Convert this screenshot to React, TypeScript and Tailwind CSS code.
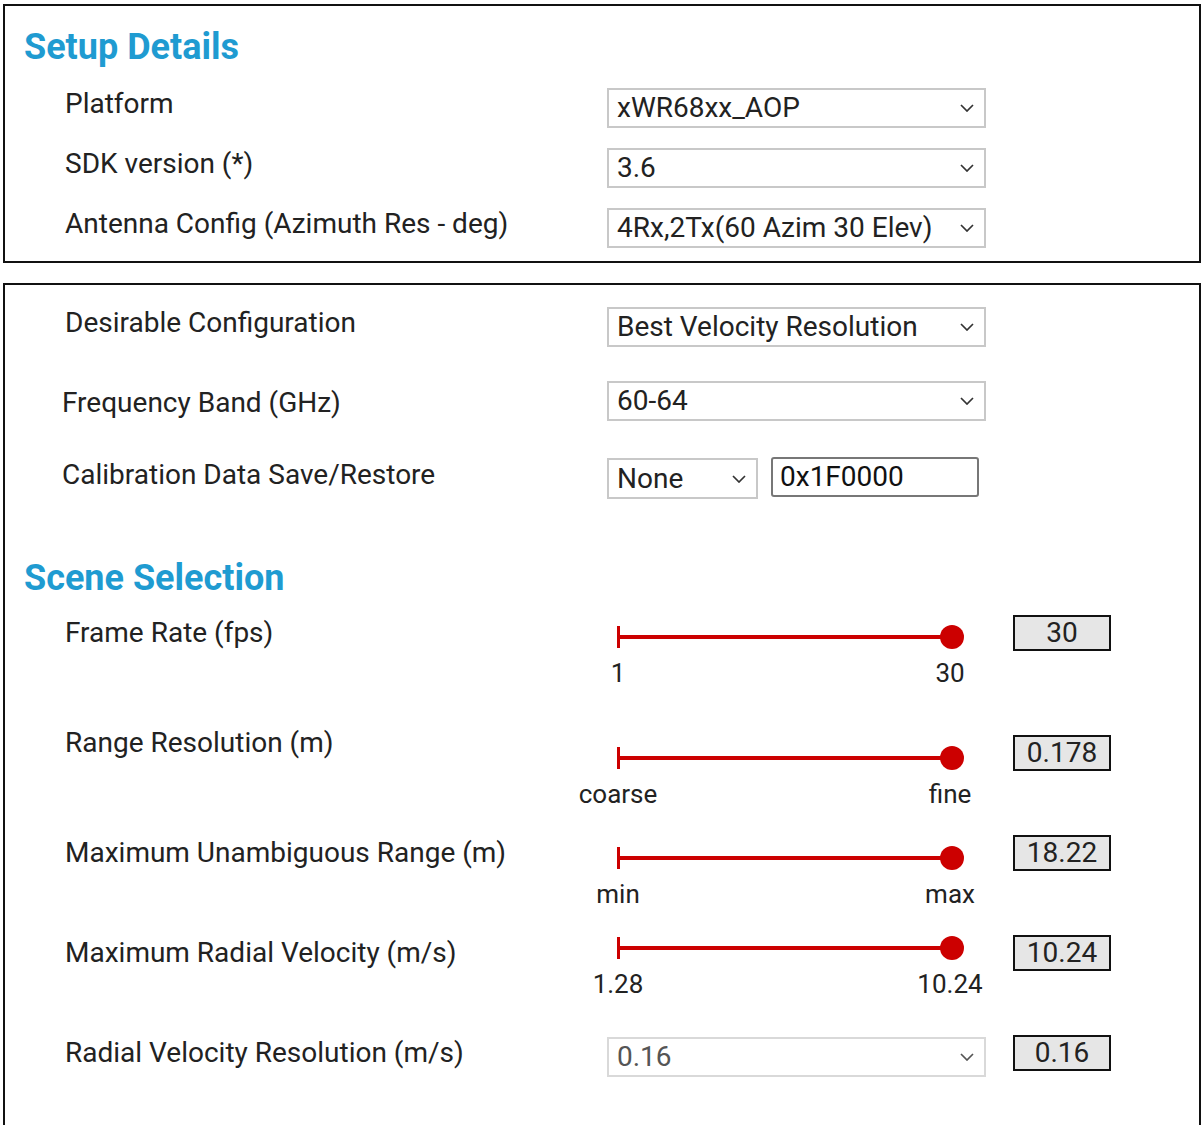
import clsx from "clsx";

type SliderRow = {
  label: string;
  min: string;
  max: string;
  value: string;
  height: string;
  labelTop: string;
  sliderTop: string;
};

const sliders: SliderRow[] = [
  { label: "Frame Rate (fps)", min: "1", max: "30", value: "30", height: "h-[120px]", labelTop: "mt-[3px]", sliderTop: "mt-[10px]" },
  { label: "Range Resolution (m)", min: "coarse", max: "fine", value: "0.178", height: "h-[100px]", labelTop: "mt-[-7px]", sliderTop: "mt-[11px]" },
  { label: "Maximum Unambiguous Range (m)", min: "min", max: "max", value: "18.22", height: "h-[100px]", labelTop: "mt-[3px]", sliderTop: "mt-[11px]" },
  { label: "Maximum Radial Velocity (m/s)", min: "1.28", max: "10.24", value: "10.24", height: "h-[100px]", labelTop: "mt-[3px]", sliderTop: "mt-[1px]" },
];

function Chevron({ muted }: { muted?: boolean }) {
  return (
    <svg width="14" height="8" viewBox="0 0 14 8" className="shrink-0">
      <path d="M1 1 L7 7 L13 1" fill="none" stroke={muted ? "#555" : "#333"} strokeWidth="1.7" />
    </svg>
  );
}

function Select({ value, className, disabled }: { value: string; className?: string; disabled?: boolean }) {
  return (
    <div
      className={clsx(
        "flex shrink-0 items-center justify-between border-2 pl-[8px] pr-[10px] text-[28px] leading-[36px]",
        disabled ? "border-[#d9d9d9] text-[#555]" : "border-[#c8c8c8] text-[#222]",
        className
      )}
    >
      <span className="whitespace-nowrap">{value}</span>
      <Chevron muted={disabled} />
    </div>
  );
}

function ValueBox({ value }: { value: string }) {
  return (
    <div className="flex h-[36px] w-[98px] shrink-0 items-center justify-center border-2 border-[#111] bg-[#e6e6e6] text-[28px] leading-none text-[#222]">
      {value}
    </div>
  );
}

function Slider({ min, max }: { min: string; max: string }) {
  return (
    <div>
      <svg width="360" height="24" viewBox="0 0 360 24" className="ml-[10px] block">
        <rect x="0" y="1" width="3" height="22" fill="#cc0000" />
        <rect x="1" y="10" width="336" height="4" fill="#cc0000" />
        <circle cx="335" cy="12" r="12" fill="#cc0000" />
      </svg>
      <div className="ml-[11px] mt-[9px] flex w-[332px] justify-between text-[26px] leading-[30px] text-[#222]">
        <span className="flex w-0 justify-center whitespace-nowrap">{min}</span>
        <span className="flex w-0 justify-center whitespace-nowrap">{max}</span>
      </div>
    </div>
  );
}

function Heading({ children }: { children: string }) {
  return <h2 className="pl-[19px] text-[36px] font-bold leading-[40px] text-[#1f9bd1]">{children}</h2>;
}

function Label({ children, className }: { children: string; className?: string }) {
  return (
    <div className={clsx("shrink-0 text-[28px] leading-[30px] text-[#222]", className)}>{children}</div>
  );
}

export default function App() {
  return (
    <div className="min-h-[1125px] bg-white pl-[3px] pt-[4px] font-['Roboto',sans-serif]">
      {/* Setup details */}
      <div className="w-[1198px] border-2 border-[#111] pb-[13px] pt-[21px]">
        <Heading>Setup Details</Heading>
        <div className="mt-[21px] flex flex-col gap-[20px]">
          {[
            ["Platform", "xWR68xx_AOP"],
            ["SDK version (*)", "3.6"],
            ["Antenna Config (Azimuth Res - deg)", "4Rx,2Tx(60 Azim 30 Elev)"],
          ].map(([label, value]) => (
            <div key={label} className="flex h-[40px] items-start">
              <Label className="ml-[60px] mt-[1px] w-[542px]">{label}</Label>
              <Select value={value} className="h-[40px] w-[379px]" />
            </div>
          ))}
        </div>
      </div>

      {/* Configuration + scene */}
      <div className="mt-[20px] w-[1198px] border-x-2 border-t-2 border-[#111] pb-[80px] pt-[22px]">
        <div className="flex h-[40px] items-start">
          <Label className="ml-[60px] mt-[1px] w-[542px]">Desirable Configuration</Label>
          <Select value="Best Velocity Resolution" className="h-[40px] w-[379px]" />
        </div>
        <div className="mt-[34px] flex h-[40px] items-start">
          <Label className="ml-[57px] mt-[7px] w-[545px]">Frequency Band (GHz)</Label>
          <Select value="60-64" className="h-[40px] w-[379px]" />
        </div>
        <div className="mt-[36px] flex h-[42px] items-start">
          <Label className="ml-[57px] mt-[3px] w-[545px]">Calibration Data Save/Restore</Label>
          <Select value="None" className="mt-[1px] h-[41px] w-[151px]" />
          <div className="ml-[13px] flex h-[40px] w-[208px] items-center rounded-[3px] border-2 border-[#777] pl-[7px] text-[28px] leading-none text-[#111]">
            0x1F0000
          </div>
        </div>

        <div className="mt-[59px]">
          <Heading>Scene Selection</Heading>
        </div>

        <div className="mt-[17px]">
          {sliders.map((s) => (
            <div key={s.label} className={clsx("flex items-start", s.height)}>
              <Label className={clsx("ml-[60px] w-[542px]", s.labelTop)}>{s.label}</Label>
              <div className={clsx("w-[406px] shrink-0", s.sliderTop)}>
                <Slider min={s.min} max={s.max} />
              </div>
              <ValueBox value={s.value} />
            </div>
          ))}
          <div className="flex h-[42px] items-start">
            <Label className="ml-[60px] mt-[3px] w-[542px]">Radial Velocity Resolution (m/s)</Label>
            <div className="mt-[2px] w-[406px] shrink-0">
              <Select value="0.16" disabled className="h-[40px] w-[379px]" />
            </div>
            <ValueBox value="0.16" />
          </div>
        </div>
      </div>
    </div>
  );
}
